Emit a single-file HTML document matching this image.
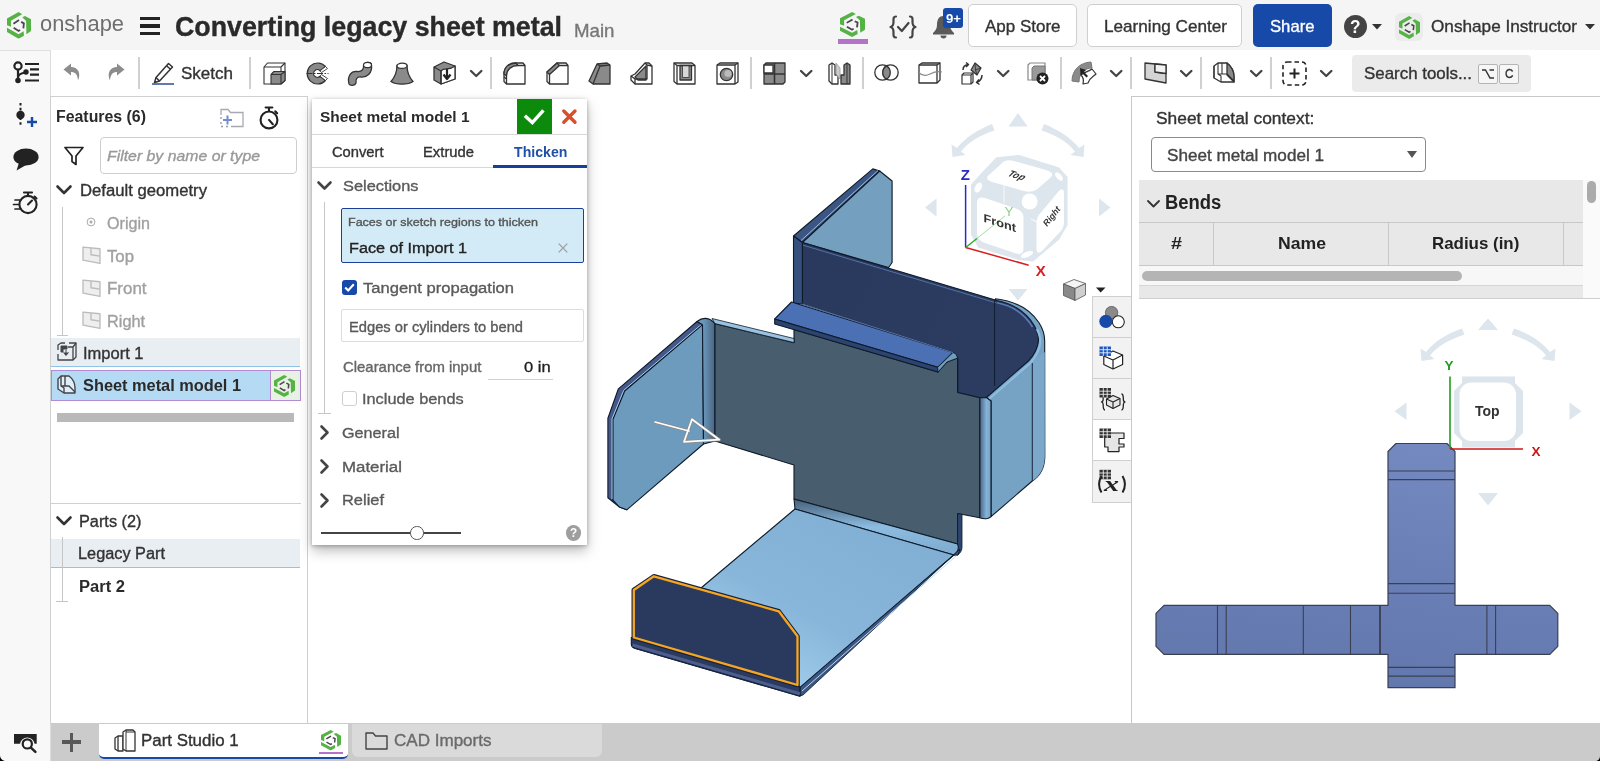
<!DOCTYPE html>
<html lang="en"><head><meta charset="utf-8"><title>Converting legacy sheet metal | Onshape</title>
<style>
*{box-sizing:border-box;margin:0;padding:0}
html,body{width:1600px;height:761px;overflow:hidden;background:#fff;font-family:"Liberation Sans",sans-serif}
#app{position:relative;width:1600px;height:761px;overflow:hidden;background:#fff;will-change:transform}
.a{position:absolute}
.t{position:absolute;white-space:nowrap;line-height:1;transform-origin:0 0;display:block}
svg{position:absolute;overflow:visible}
.btn{position:absolute;border:1px solid #cfcfcf;border-radius:5px;background:#fff}
.vd{position:absolute;width:2px;background:#d0d0d0;top:57px;height:32px}
</style></head><body><div id="app">
<!-- top bar -->
<div class="a" style="left:0;top:0;width:1600px;height:50px;background:#f5f5f5"></div>
<!-- toolbar -->
<div class="a" style="left:50px;top:50px;width:1550px;height:46px;background:#fff"></div>
<!-- left sidebar -->
<div class="a" style="left:0;top:50px;width:50.500px;height:711px;background:#f8f8f8;border-top:1px solid #e0e0e0;border-right:1px solid #dcdcdc"></div>

<!-- logo -->
<svg width="0" height="0" style="left:0;top:0"><defs>
 <symbol id="ons" viewBox="130 130 455 510" preserveAspectRatio="none">
  <polygon points="130,255 350,130 418,172 205,298 205,412 130,380" fill="#55b244"/>
  <polygon points="420,232 472,204 585,270 585,492 498,552 492,300" fill="#55b244"/>
  <polygon points="130,430 350,552 445,498 452,580 350,640 130,512" fill="#55b244"/>
  <path d="M252,352 L358,284 M398,318 L450,346 L440,442 M256,430 L350,490 L378,470" fill="none" stroke="#4a4650" stroke-width="34"/>
 </symbol></defs></svg>
<svg style="left:6.800px;top:11.800px" width="24" height="26.800"><use href="#ons" width="24" height="26.800"/></svg>
<span class="t" style="left:40.0px;top:12.7px;font-size:22.5px;font-weight:400;color:#6e6e6e;transform:scaleX(0.9730);-webkit-text-stroke:0">onshape</span>
<!-- hamburger -->
<div class="a" style="left:140px;top:17px;width:20px;height:3.4px;background:#222"></div>
<div class="a" style="left:140px;top:24.3px;width:20px;height:3.4px;background:#222"></div>
<div class="a" style="left:140px;top:31.6px;width:20px;height:3.4px;background:#222"></div>
<span class="t" style="left:175.0px;top:13.2px;font-size:28.0px;font-weight:700;color:#2a2a2a;transform:scaleX(0.9566);-webkit-text-stroke:0.4px">Converting legacy sheet metal</span>
<span class="t" style="left:574.0px;top:20.9px;font-size:19.0px;font-weight:400;color:#777;transform:scaleX(0.9832);-webkit-text-stroke:0.35px;">Main</span>

<!-- doc icon w/ purple underline -->
<svg style="left:840px;top:12px" width="25" height="25"><use href="#ons" width="25" height="25"/></svg>
<div class="a" style="left:838px;top:39px;width:30px;height:5px;background:#b273c9"></div>
<!-- {v} -->
<svg style="left:889px;top:15px" width="28" height="24" viewBox="0 0 28 24" fill="none" stroke="#444" stroke-width="2.2" stroke-linecap="round" stroke-linejoin="round">
 <path d="M7,1.5 C4,1.5 4.5,4 4.5,7 C4.5,10 3.5,11.5 1.5,12 C3.5,12.5 4.5,14 4.5,17 C4.5,20 4,22.5 7,22.5"/>
 <path d="M21,1.5 C24,1.5 23.5,4 23.5,7 C23.5,10 24.5,11.5 26.5,12 C24.5,12.5 23.5,14 23.5,17 C23.5,20 24,22.5 21,22.5"/>
 <path d="M9,12 L12.8,16 L19.5,8"/>
</svg>
<!-- bell -->
<svg style="left:932px;top:14px" width="23" height="25" viewBox="0 0 23 25">
 <path d="M11.5,2 C6,2 5,7 5,11 C5,15 3,17 1,19 L1,20.5 L22,20.5 L22,19 C20,17 18,15 18,11 C18,7 17,2 11.5,2 Z" fill="#5a5a5a"/>
 <path d="M8.5,21.5 a3,3 0 0 0 6,0 Z" fill="#5a5a5a"/>
</svg>
<div class="a" style="left:943px;top:8px;width:20px;height:20px;background:#1749a8;border-radius:3px"></div>
<span class="t" style="left:945.5px;top:12.0px;font-size:13.0px;font-weight:700;color:#fff;transform:scaleX(1.0121);">9+</span>
<!-- buttons -->
<div class="btn" style="left:968px;top:4px;width:109px;height:43px"></div>
<span class="t" style="left:985.0px;top:17.6px;font-size:17.0px;font-weight:400;color:#333;transform:scaleX(0.9987);-webkit-text-stroke:0.35px;">App Store</span>
<div class="btn" style="left:1087px;top:4px;width:155px;height:43px"></div>
<span class="t" style="left:1103.5px;top:17.6px;font-size:17.0px;font-weight:400;color:#333;transform:scaleX(1.0090);-webkit-text-stroke:0.35px;">Learning Center</span>
<div class="a" style="left:1253px;top:4px;width:79px;height:43px;background:#1749a8;border-radius:5px"></div>
<span class="t" style="left:1270.0px;top:17.6px;font-size:17.0px;font-weight:400;color:#fff;transform:scaleX(0.9811);-webkit-text-stroke:0.35px;">Share</span>
<!-- help -->
<div class="a" style="left:1344px;top:15px;width:23px;height:23px;border-radius:50%;background:#444"></div>
<span class="t" style="left:1350.3px;top:16.9px;font-size:19.0px;font-weight:700;color:#fff;transform:scaleX(0.9045);">?</span>
<svg style="left:1372px;top:23.5px" width="10" height="6"><polygon points="0,0 10,0 5,5.5" fill="#333"/></svg>
<!-- user -->
<div class="a" style="left:1395px;top:13px;width:28px;height:28px;border-radius:6px;background:#ececec"></div>
<svg style="left:1398.500px;top:15.500px" width="21" height="23"><use href="#ons" width="21" height="23"/></svg>
<span class="t" style="left:1431.0px;top:17.6px;font-size:17.0px;font-weight:400;color:#333;transform:scaleX(1.0099);-webkit-text-stroke:0.35px;">Onshape Instructor</span>
<svg style="left:1585px;top:23.5px" width="10" height="6"><polygon points="0,0 10,0 5,5.5" fill="#333"/></svg>
<!-- toolbar icons -->
<svg width="0" height="0" style="left:0;top:0"><defs>
 <g id="chev"><path d="M1,1 L6.2,6 L11.4,1" fill="none" stroke="#444" stroke-width="2.300" stroke-linecap="round" stroke-linejoin="round"/></g>
</defs></svg>
<!-- undo / redo -->
<svg style="left:63px;top:63px" width="18" height="19" viewBox="0 0 18 19"><path d="M8,0.5 L0.5,6.5 L8,12.5 L8,9 C12,9 14.5,11 15,17.5 C18.5,9.5 14.5,4.2 8,4 Z" fill="#8c8c8c"/></svg>
<svg style="left:107px;top:63px" width="18" height="19" viewBox="0 0 18 19"><path d="M10,0.5 L17.5,6.5 L10,12.5 L10,9 C6,9 3.5,11 3,17.5 C-0.5,9.5 3.5,4.2 10,4 Z" fill="#8c8c8c"/></svg>
<div class="vd" style="left:138px"></div>
<!-- pencil -->
<svg style="left:151px;top:62px" width="24" height="24" viewBox="0 0 24 24" fill="none" stroke="#333" stroke-width="1.5" stroke-linejoin="round">
 <path d="M17.5,1.5 L21.5,5 L8.5,19 L3.5,20.5 L5,15.5 Z"/><path d="M15.5,3.8 L19.5,7.3"/><path d="M5,15.5 L8.5,19"/>
 <path d="M1,22 L23,22" stroke="#1f3f88" stroke-width="1.400"/>
</svg>
<span class="t" style="left:181.0px;top:64.6px;font-size:17.0px;font-weight:400;color:#333;transform:scaleX(1.0006);-webkit-text-stroke:0.35px;">Sketch</span>
<div class="vd" style="left:249px"></div>
<!-- extrude -->
<svg style="left:263px;top:62px" width="23" height="23" viewBox="0 0 23 23" stroke="#333" stroke-width="1.100" stroke-linejoin="round">
 <path d="M1,5 L4.500,1 L22,1 L22,18.500 L18,22 L1,22 Z" fill="#fff"/><path d="M1,5 L18,5 L18,22 M18,5 L22,1" fill="none"/>
 <path d="M8,12.500 L11,9.500 L22,9.500 L22,18.500 L18,22 L8,22 Z" fill="#8a8a8a"/><path d="M8,12.500 L18,12.500 L18,22 M18,12.500 L22,9.500" fill="none"/>
</svg>
<!-- revolve -->
<svg style="left:306px;top:62px" width="23" height="23" viewBox="0 0 23 23">
 <path d="M19.500,4.500 A10.500,10.500 0 1 0 19.500,18.500 L14,14.200 A3.800,3.800 0 1 1 14,8.800 Z" fill="#8a8a8a" stroke="#333" stroke-width="1.200" stroke-linejoin="round"/>
 <path d="M19.500,4.500 L21.500,6.500 L15.500,10.500 L14,8.800 Z M19.500,18.500 L21.500,16.500 L15.500,12.500 L14,14.200 Z" fill="#fff" stroke="#333" stroke-width="0.900" stroke-linejoin="round"/>
 <path d="M0.500,11.500 L22.500,11.500" stroke="#333" stroke-width="1" stroke-dasharray="6,1.500,1.500,1.500"/>
</svg>
<!-- sweep -->
<svg style="left:347px;top:61px" width="26" height="25" viewBox="0 0 26 25">
 <path d="M2,23 C0,15 4,10 10,10.5 C15,11 17,8 16.5,4.5 C17,1 24,0 24.5,4 C25.5,12 20,16.5 14,16 C10,15.5 8.5,18 9,22 C8,25 3,25 2,23 Z" fill="#8a8a8a" stroke="#333" stroke-width="1.3"/>
 <ellipse cx="20.5" cy="4" rx="4" ry="2.6" fill="#fff" stroke="#333" stroke-width="1.2"/>
</svg>
<!-- loft -->
<svg style="left:390px;top:62px" width="24" height="23" viewBox="0 0 24 23">
 <path d="M7,3.5 C7,9 5,15 1,19.5 C6,23 18,23 23,19.5 C19,15 17,9 17,3.5 Z" fill="#8a8a8a" stroke="#333" stroke-width="1.3"/>
 <ellipse cx="12" cy="3.8" rx="5" ry="2.6" fill="#fff" stroke="#333" stroke-width="1.2"/>
</svg>
<!-- thicken -->
<svg style="left:433px;top:61px" width="23" height="24" viewBox="0 0 23 24" stroke="#333" stroke-width="1.3" stroke-linejoin="round">
 <path d="M1,6 L11,1 L22,5 L22,18 L8,23 L1,19 Z" fill="#8a8a8a"/>
 <path d="M8,10 C11,6 16,10 22,5 L22,18 L8,23 Z" fill="#fff"/><path d="M1,6 L8,10 L8,23" fill="none"/>
 <path d="M14,8 L14,17 M10.5,13.5 L14,18 L17.5,13.5" fill="none" stroke="#222" stroke-width="2.2"/>
</svg>
<svg style="left:469.5px;top:69.5px" width="13" height="8"><use href="#chev"/></svg>
<div class="vd" style="left:489.5px"></div>
<!-- fillet -->
<svg style="left:503px;top:62px" width="23" height="23" viewBox="0 0 23 23" stroke="#333" stroke-width="1.3" stroke-linejoin="round">
 <path d="M1,12 C1,5 6,1 13,1 L20,1 L22,3.5 L22,22 L3.5,22 L1,19.5 Z" fill="#fff"/>
 <path d="M1,12 C1,5 6,1 13,1 L15,3.5 C9,3.5 3.5,7 3.5,14 Z" fill="#8a8a8a"/>
 <path d="M3.5,14 L3.5,22 M15,3.5 L22,3.5 M1,15 L3.5,17" fill="none"/>
</svg>
<!-- chamfer -->
<svg style="left:545.5px;top:62px" width="23" height="23" viewBox="0 0 23 23" stroke="#333" stroke-width="1.3" stroke-linejoin="round">
 <path d="M1,10 L11,1 L20,1 L22,3.5 L22,22 L3.5,22 L1,19.5 Z" fill="#fff"/>
 <path d="M1,10 L11,1 L13.5,3.5 L3.5,12.5 Z" fill="#8a8a8a"/>
 <path d="M3.5,12.5 L3.5,22 M13.5,3.5 L22,3.5" fill="none"/>
</svg>
<!-- draft -->
<svg style="left:588px;top:62px" width="23" height="23" viewBox="0 0 23 23" stroke="#333" stroke-width="1.3" stroke-linejoin="round">
 <path d="M1,19 L9,2 L19,1 L22,3 L22,22 L5,22 Z" fill="#8a8a8a"/>
 <path d="M9,2 L12,4 L22,3 M12,4 L5,22" fill="none"/>
</svg>
<!-- rib -->
<svg style="left:630px;top:62px" width="23" height="23" viewBox="0 0 23 23" stroke="#333" stroke-width="1.3" stroke-linejoin="round">
 <path d="M1,14 L5,12 L15,1 L19,1 L22,4 L22,22 L5,22 L1,18 Z" fill="#fff"/>
 <path d="M5,15 L16,4 L16,18 L8,18 Z" fill="#8a8a8a"/>
 <path d="M1,14 L5,17 L5,22 M5,17 L17,17 L17,3 L15,1 M17,3 L22,4" fill="none"/>
</svg>
<!-- shell -->
<svg style="left:673px;top:62px" width="23" height="23" viewBox="0 0 23 23" stroke="#333" stroke-width="1.3" stroke-linejoin="round">
 <path d="M1,1 L19,1 L22,3.5 L22,22 L4,22 L1,19.5 Z" fill="#fff"/>
 <path d="M7,3.5 L18.5,3.5 L18.5,18 L7,18 Z" fill="#8a8a8a"/><path d="M9.5,3.5 L16,3.5 L16,15.5 L9.5,15.5 Z" fill="#d8d8d8" stroke-width="0.8"/>
 <path d="M1,1 L4,3.5 L22,3.5 M4,3.5 L4,22" fill="none"/>
</svg>
<!-- hole -->
<svg style="left:715.5px;top:62px" width="23" height="23" viewBox="0 0 23 23" stroke="#333" stroke-width="1.3" stroke-linejoin="round">
 <path d="M1,3 L4,1 L22,1 L22,20 L19,22 L1,22 Z" fill="#fff"/><path d="M1,3 L19,3 L19,22 M19,3 L22,1" fill="none"/>
 <circle cx="10.5" cy="12.5" r="6.2" fill="#8a8a8a"/><circle cx="12" cy="11.5" r="3.6" fill="#bbb" stroke="none"/>
</svg>
<div class="vd" style="left:749.5px"></div>
<!-- pattern -->
<svg style="left:763px;top:62px" width="23" height="23" viewBox="0 0 23 23" stroke="#333" stroke-width="1.3" stroke-linejoin="round">
 <path d="M1,3 L3,1 L22,1 L22,20 L20,22 L1,22 Z" fill="#8a8a8a"/>
 <path d="M1,3 L10,3 L10,11 L1,11 Z" fill="#fff"/>
 <path d="M11.5,1 L11.5,22 M1,12 L22,12" fill="none" stroke-width="1.6"/>
</svg>
<svg style="left:799.5px;top:69.5px" width="13" height="8"><use href="#chev"/></svg>
<!-- mirror -->
<svg style="left:828px;top:62px" width="23" height="23" viewBox="0 0 23 23" stroke="#333" stroke-width="1.3" stroke-linejoin="round">
 <path d="M1,3 L4,1 L7,3 L7,13 L10,13 L10,22 L4,22 L1,19 Z" fill="#fff"/><path d="M4,1 L4,22" fill="none" stroke-width="1"/>
 <path d="M8,1 L12,6 L12,17 L8,12 Z" fill="#ccc" stroke="#999" stroke-width="0.8"/>
 <path d="M13,22 L13,13 L16,13 L16,3 L19,1 L22,3 L22,22 Z" fill="#8a8a8a"/><path d="M19,1 L19,22" fill="none" stroke-width="1"/>
</svg>
<div class="vd" style="left:862px"></div>
<!-- boolean -->
<svg style="left:874px;top:63px" width="25" height="19" viewBox="0 0 25 19" stroke="#333" stroke-width="1.3">
 <circle cx="8.5" cy="9.5" r="7.7" fill="#fff"/><circle cx="16.5" cy="9.5" r="7.7" fill="#fff"/>
 <path d="M12.5,2.9 A7.7,7.7 0 0 1 12.5,16.1 A7.7,7.7 0 0 1 12.5,2.9 Z" fill="#8a8a8a"/>
</svg>
<!-- split -->
<svg style="left:917.5px;top:62px" width="24" height="22" viewBox="0 0 24 22" stroke="#333" stroke-width="1.3" stroke-linejoin="round" fill="none">
 <path d="M1,3 L4,1 L22,1 L22,18 L19,21 L1,21 Z" fill="#fff"/><path d="M1,3 L19,3 L19,21 M19,3 L22,1"/>
 <path d="M0,10 C4,14 8,14 12,12 C16,10 20,9 24,10" stroke="#888" stroke-width="1.2"/>
</svg>
<!-- transform -->
<svg style="left:960px;top:61px" width="24" height="24" viewBox="0 0 24 24" stroke="#333" stroke-width="1.2" stroke-linejoin="round">
 <path d="M2,14 L4,12 L13,12 L13,21 L11,23 L2,23 Z" fill="#fff"/><path d="M2,14 L11,14 L11,23 M11,14 L13,12" fill="none"/>
 <path d="M15,2 L21,7 L17,14 L11,9 Z" fill="#8a8a8a"/><path d="M15,2 L15.5,9 L17,14 M15.5,9 L21,7" fill="none" stroke-width="0.9"/>
 <path d="M3,9 C3,6 5,4 8,3.5 M6,1.5 L8.5,3.5 L6,6" fill="none" stroke-width="1.5"/>
 <path d="M22,14 C22,18 20,20 17,21.5 M19.5,23.5 L16.5,21.5 L19,18.5" fill="none" stroke-width="1.5"/>
</svg>
<svg style="left:997px;top:69.5px" width="13" height="8"><use href="#chev"/></svg>
<!-- delete -->
<svg style="left:1027px;top:62px" width="22" height="23" viewBox="0 0 22 23">
 <path d="M1,3 L3,1 L18,1 L18,16 L16,18 L1,18 Z" fill="#fff" stroke="#888" stroke-width="1.2"/>
 <path d="M5,6 L7,4 L18,4 L18,16 L16,18 L5,18 Z" fill="#9a9a9a" stroke="#777" stroke-width="1"/>
 <circle cx="15.5" cy="16.5" r="6" fill="#222"/><path d="M13,14 L18,19 M18,14 L13,19" stroke="#fff" stroke-width="1.8"/>
</svg>
<div class="vd" style="left:1059.5px"></div>
<!-- surface -->
<svg style="left:1071px;top:61px" width="26" height="25" viewBox="0 0 26 25">
 <path d="M1,20 C1,9 9,1.5 20,1 L21,7 C14,7 8,12 8,21 Z" fill="#8a8a8a" stroke="#777" stroke-width="1"/>
 <path d="M10,14 C13,11 17,11 21,8 L25,13 C22,16 19,16 17,22 L12,23 C13,19 12,16 10,14 Z" fill="#fff" stroke="#333" stroke-width="1.2" stroke-linejoin="round"/>
 <path d="M9,7 L15,9 L13,11 L17,15 L15.5,16.5 L11.5,12.5 L9.5,14.5 Z" fill="#222"/>
</svg>
<svg style="left:1109.5px;top:69.5px" width="13" height="8"><use href="#chev"/></svg>
<div class="vd" style="left:1130px"></div>
<!-- plane -->
<svg style="left:1143.5px;top:62px" width="23" height="22" viewBox="0 0 23 22" stroke="#333" stroke-width="1.3" stroke-linejoin="round">
 <path d="M1,1 L22,3 L22,21 L1,17 Z" fill="#d4d4d4"/><path d="M11,2 L11,10 L22,11.5" fill="none"/><path d="M11,2 L22,3 L22,11.5 L11,10 Z" fill="#f2f2f2"/>
</svg>
<svg style="left:1179.5px;top:69.5px" width="13" height="8"><use href="#chev"/></svg>
<div class="vd" style="left:1199.5px"></div>
<!-- sheet metal -->
<svg style="left:1213px;top:62px" width="22" height="21" viewBox="0 0 22 21" stroke="#333" stroke-width="1.3" stroke-linejoin="round">
 <path d="M1,4 L5,1 L14,1 C18,4 21,9 21,15 L21,20 L8,20 L1,16 Z" fill="#fff"/>
 <path d="M14,1 C18,4 21,9 21,15 L21,20 L14,13 Z" fill="#8a8a8a"/>
 <path d="M5,1 L5,12 L8,14 L8,20 M5,12 L14,12 L21,19 M9,1 L9,12 M1,4 L1,16" fill="none" stroke-width="1.1"/>
</svg>
<svg style="left:1249.5px;top:69.5px" width="13" height="8"><use href="#chev"/></svg>
<div class="vd" style="left:1269.5px"></div>
<!-- dashed box + -->
<svg style="left:1282px;top:61px" width="25" height="25" viewBox="0 0 25 25" fill="none" stroke="#222">
 <rect x="1" y="1" width="23" height="23" rx="4" stroke-width="1.6" stroke-dasharray="4.5,3"/>
 <path d="M12.5,7.5 L12.5,17.5 M7.5,12.5 L17.5,12.5" stroke-width="2"/>
</svg>
<svg style="left:1319.5px;top:69.5px" width="13" height="8"><use href="#chev"/></svg>
<!-- search -->
<div class="a" style="left:1352px;top:54.5px;width:179px;height:37px;background:#ebebeb;border-radius:4px"></div>
<span class="t" style="left:1364.0px;top:64.6px;font-size:17.0px;font-weight:400;color:#333;transform:scaleX(0.9939);-webkit-text-stroke:0.35px;">Search tools...</span>
<div class="a" style="left:1477.5px;top:63.5px;width:20px;height:20.5px;background:#f6f6f6;border:1px solid #b5b5b5;border-radius:2px"></div>
<div class="a" style="left:1498.5px;top:63.5px;width:20.5px;height:20.5px;background:#f6f6f6;border:1px solid #b5b5b5;border-radius:2px"></div>
<svg style="left:1481.5px;top:68.5px" width="12" height="10" fill="none" stroke="#333" stroke-width="1.4"><path d="M0,1 L3.5,1 L8,9 L12,9 M7.5,1 L12,1"/></svg>
<span class="t" style="left:1504.5px;top:67.9px;font-size:12.5px;font-weight:400;color:#333;transform:scaleX(0.9418);-webkit-text-stroke:0.35px;">C</span>
<!-- 3D viewport -->
<svg style="left:590px;top:97px" width="541" height="626" viewBox="590 97 541 626">
 <defs>
  <linearGradient id="gFloor" x1="0.9" y1="0" x2="0.1" y2="1"><stop offset="0" stop-color="#80aed2"/><stop offset="0.6" stop-color="#88b6da"/><stop offset="1" stop-color="#a9d5f2"/></linearGradient>
  <linearGradient id="gBendL" x1="0" y1="0" x2="1" y2="0"><stop offset="0" stop-color="#6d9bbe"/><stop offset="0.35" stop-color="#6a97ba"/><stop offset="1" stop-color="#486580"/></linearGradient>
  <linearGradient id="gBendR" x1="0" y1="0" x2="1" y2="0"><stop offset="0" stop-color="#4a6480"/><stop offset="0.6" stop-color="#84b4da"/><stop offset="1" stop-color="#76a2c4"/></linearGradient>
  <linearGradient id="gBendB" x1="0" y1="0" x2="0.12" y2="1"><stop offset="0" stop-color="#46607a"/><stop offset="0.55" stop-color="#8cbce0"/><stop offset="1" stop-color="#80aed2"/></linearGradient>
  <linearGradient id="gWall" x1="0" y1="0" x2="1" y2="0.3"><stop offset="0" stop-color="#2a3a5e"/><stop offset="1" stop-color="#2b3c60"/></linearGradient>
 </defs>
 <g stroke="#0e1a2a" stroke-width="1.1" stroke-linejoin="round">
  <!-- back tab edge strip -->
  <polygon points="793.5,236 872.8,168.9 879.7,171 802.4,242.5" fill="#3c5684"/>
  <path d="M800.500,241 L878,170.500" fill="none" stroke="#9fc6e6" stroke-width="0.900"/>
  <!-- back tab -->
  <polygon points="802.4,242.5 879.7,171 892.1,181 892.1,262.5 888.6,267.5" fill="#749fbe"/>
  <!-- outer light surfaces of curved wall + right side -->
  <path d="M995.500,298.800 C1014,301 1030,309 1039,322.800 C1043,329 1044.700,334 1044.700,341 L1044.800,457 C1044.500,468 1040,476 1032.300,481 L991,516.700 L991,401 L986.400,397.500 Z" fill="#76a2c4"/>
  <path d="M1032.300,362 L1044.800,352 L1044.800,457 C1044.500,468 1040,476 1032.300,481 Z" fill="#7aa7ca" stroke="none"/>
  <!-- back wall dark -->
  <path d="M802.400,242.500 L997,300.500 C1012,303.500 1026,311.500 1034.500,326 C1037.500,332 1038.500,336 1038.500,340 C1038.500,347 1034,355.500 1028.500,361 L986.400,397.500 L979.700,397.700 L957.600,392.500 L957.600,357.800 L953,352.500 L802,304 Z" fill="url(#gWall)"/>
  <path d="M802.400,245 L996.500,303" fill="none" stroke="#5878ae" stroke-width="0.900"/>
  <path d="M997,302.800 C1011,305.500 1024,313 1032.500,327" fill="none" stroke="#5a7cba" stroke-width="1.600"/>
  <path d="M1036.800,329 C1039.500,334 1040.500,338 1040.300,342 C1040,349 1035.500,357.500 1030.500,362.800 L989,399" fill="none" stroke="#8ebce0" stroke-width="2.200"/>
  <!-- bend strip left of wall -->
  <polygon points="793.500,236 802.400,242.500 802.400,304 793.500,303" fill="#36507e"/>
  <path d="M994.600,300 L994.600,386" fill="none" stroke-width="0.900"/>
  <path d="M1032.300,363 L1032.300,481" fill="none" stroke-width="0.900"/>
  <!-- bend strip right side -->
  <path d="M979.700,397.700 L986.400,397.500 L991,401 L991,516.700 C989,519 984,519.500 979.700,517.700 Z" fill="url(#gBendR)"/>
  <!-- left flange -->
  <polygon points="697,321.500 618.4,388.8 607.9,418.3 607.9,497.8 619.4,507 626.8,509.8 613,500 613,419.3 624.7,391 702.5,324.7" fill="#44598a"/>
  <polygon points="702.5,324.7 624.7,391 613,419.3 613,500 619.4,507 626.8,509.8 703.5,444" fill="#6d9bbe"/>
  <path d="M701.500,324.300 L623.700,390.300 L612,418.800 L612,499" fill="none" stroke="#a8cdea" stroke-width="1"/>
  <path d="M697,321.500 C702,317.500 709,316.500 715,323.600 L715,441 L703.5,444 L702.5,324.7 Z" fill="url(#gBendL)"/>
  <!-- front panel -->
  <path d="M715,323.600 L794,342.600 L794,329.500 L938,372 L947,362 L957.6,358 L957.6,392.500 L979.7,397.700 L979.7,517.700 L957.6,513.500 L957.6,544 L794,499 L794,465 L715,441 Z" fill="#485e6e"/>
  <path d="M712,318.500 L794,338.500 L794,342.600 L715,323.600 Z" fill="#9cc2e2" stroke-width="0.800"/>
  <!-- shelf -->
  <polygon points="791.500,302 774.700,319 937.700,367.300 953,352.500" fill="#4b70b4"/>
  <polygon points="774.700,319 937.700,367.300 938,372 774.700,324" fill="#2c4470"/>
  <polygon points="937.700,367.300 953,352.500 956,354 957.600,358 947,362 938,372" fill="#6f9dc0" stroke-width="0.8"/>
  <path d="M802,304 L953,352.500" fill="none" stroke="#6a8cc8" stroke-width="0.8"/>
  <!-- bend between front and floor -->
  <path d="M794,499 L957.600,544 C959.500,548 958,552 953.800,555 L795,509 Z" fill="url(#gBendB)"/>
  <path d="M957.600,513.500 L962,514.500 L962,547 C962,551 960,553 958,555 L953.800,555 C958,552 959.500,548 957.600,544 Z" fill="#2c4470" stroke-width="0.8"/>
  <!-- floor -->
  <polygon points="795,509 953.800,555 800,687.500 797.500,685 797.500,636.300 778.800,611.300 701,588" fill="url(#gFloor)"/>
  <polygon points="953.800,555 958,555 960,549 803,695 800,696 800,687.500" fill="#3c5684" stroke-width="0.8"/>
  <path d="M956,556 L802,691" fill="none" stroke="#b8dcf4" stroke-width="1"/>
  <!-- selected face lower strip -->
  <path d="M633.800,637.500 L797.500,685 L800,687.500 L800,696.300 L634.500,648.200 C632.500,647.500 631.300,646 631.300,644 L631.300,637.500 Z" fill="#2b3b60"/>
  <path d="M632.500,645 L800,693.800" fill="none" stroke="#4c5e8e" stroke-width="3"/>
  <path d="M634.500,648.200 L800,696.300" fill="none" stroke="#1a2540" stroke-width="0.900"/>
  <!-- selected face -->
  <polygon points="633.800,590 653.800,576.300 778.800,611.300 797.500,636.300 797.500,685 633.800,637.500" fill="#2a3a5e" stroke="#18233c" stroke-width="4.600"/>
  <polygon points="633.800,590 653.800,576.300 778.800,611.300 797.500,636.300 797.500,685 633.800,637.500" fill="#2a3a5e" stroke="#f6a623" stroke-width="2.300"/>
 </g>
 <!-- arrow manipulator -->
 <g fill="none" stroke-linejoin="round" stroke-linecap="round">
  <path d="M655,422 L689,431" stroke="#8a8a8a" stroke-width="3"/>
  <polygon points="692,419.300 684,441.800 719.300,439.700" stroke="#8a8a8a" stroke-width="3.2"/>
  <path d="M655,422 L689,431" stroke="#fff" stroke-width="1.6"/>
  <polygon points="692,419.300 684,441.800 719.300,439.700" stroke="#fff" stroke-width="1.8"/>
 </g>

 <!-- view cube -->
 <g fill="#dde5ed">
  <polygon points="1018,113 1027.500,126.500 1008.500,126.500"/>
  <polygon points="1018,300.500 1027.500,289 1008.500,289"/>
  <polygon points="925,207.500 936.500,198.500 936.500,216.500"/>
  <polygon points="1110.500,207.500 1099,198.500 1099,216.500"/>
  <path d="M992,124 C977,130 965,138 957,148 L951.500,144.500 L952.500,157 L965.500,155 L961,151.500 C968,142.500 980,135 994.500,130.500 Z"/>
  <path d="M1044,124 C1059,130 1071,138 1079,148 L1084.500,144.500 L1083.500,157 L1070.500,155 L1075,151.500 C1068,142.500 1056,135 1041.500,130.500 Z"/>
  <path d="M997,158.700 L1018.800,156.500 L1058,168.600 L1066,177.400 L1066,224.700 L1058,238.500 L1032.600,260 L1018.800,258.500 L979.400,246.400 L972.500,234.600 L972.500,185.300 L979.400,177.400 Z" stroke="#dde5ed" stroke-width="3" stroke-linejoin="round"/>
 </g>
 <g fill="#fff">
  <path d="M1000,165 C1004,160.500 1008,159.500 1014,161 L1046,170 C1053,172 1054,175 1049,179 L1038,188.500 C1033,192 1028,192.500 1022,190.500 L992,182 C986,180 985.500,177.500 990,174 Z"/>
  <path d="M977,203 C977,198 980,196.500 985,198 L1016,208.500 C1021,210.500 1023.500,213 1023.500,218 L1023.500,248 C1023.500,253 1021,255 1016,253.500 L985,243 C980,241 977,238 977,233 Z"/>
  <path d="M1036.500,224 C1036.500,219 1037.500,216 1041,212.500 L1058,192 C1061.500,188 1064,188.500 1064,193.500 L1064,221 C1064,226 1063,229 1059.500,232.500 L1043,250 C1039,254 1036.500,253.500 1036.500,248.500 Z"/>
  <ellipse cx="978.300" cy="187.500" rx="3.200" ry="5.500" transform="rotate(28 978.300 187.500)"/>
  <ellipse cx="1029.600" cy="201.500" rx="8" ry="8"/>
  <ellipse cx="1027" cy="254.500" rx="6.500" ry="2.800" transform="rotate(-22 1027 254.500)"/>
  <ellipse cx="1059" cy="176.500" rx="2.500" ry="5" transform="rotate(-42 1059 176.500)"/>
  <path d="M1003.600,185.500 L1004.400,185.500 L1004.400,203 L1003.600,203 Z M1031,218.500 L1037,221.500 L1037,222.500 L1031,219.500 Z"/>
 </g>
 <path d="M965.600,247.500 L965.600,185" stroke="#2a2ac8" stroke-width="1.500"/>
 <path d="M965.600,247.500 L1028.700,265.200" stroke="#d82020" stroke-width="1.500"/>
 <path d="M965.600,247.500 L977,238.400" stroke="#2aa82a" stroke-width="1.300"/><path d="M977,238.400 L1005,216" stroke="#a5dba5" stroke-width="1"/>
 <text x="960.800" y="179.500" font-family="Liberation Sans, sans-serif" font-size="15" font-weight="700" fill="#2a2ac8">Z</text>
 <text x="1035.800" y="276" font-family="Liberation Sans, sans-serif" font-size="15" font-weight="700" fill="#d82020">X</text>
 <text x="1004.500" y="216" font-family="Liberation Sans, sans-serif" font-size="13.500" fill="#8fd08f">Y</text>
 <text transform="translate(1006.500,175.500) rotate(17) skewX(-28)" font-family="Liberation Sans, sans-serif" font-size="9.500" font-weight="700" fill="#333">Top</text>
 <text transform="translate(983.500,221.800) skewY(17.400)" font-family="Liberation Sans, sans-serif" font-size="11.800" font-weight="700" fill="#333" textLength="32.500" lengthAdjust="spacingAndGlyphs">Front</text>
 <text transform="translate(1046.800,227.300) rotate(-52) skewX(-12)" font-family="Liberation Sans, sans-serif" font-size="8.800" font-weight="700" fill="#333">Right</text>
 <!-- small cube + caret -->
 <g stroke="#555" stroke-width="0.8" stroke-linejoin="round">
  <polygon points="1063.500,284 1074,279.500 1085.500,283.500 1075,288.500" fill="#f4f4f4"/>
  <polygon points="1063.500,284 1075,288.500 1075,300.500 1063.500,295.500" fill="#8a8a8a"/>
  <polygon points="1075,288.500 1085.500,283.500 1085.500,295 1075,300.500" fill="#cfcfcf"/>
 </g>
 <polygon points="1096,287.500 1105.500,287.500 1100.700,292.500" fill="#222"/>
</svg>
<!-- viewport side buttons -->
<div class="a" style="left:1092px;top:296px;width:40px;height:206.5px;background:#f2f2f2;border:1px solid #cfcfcf"></div>
<div class="a" style="left:1093px;top:419.500px;width:38px;height:40.500px;background:#fff"></div>
<div class="a" style="left:1093px;top:337px;width:38px;height:1px;background:#cfcfcf"></div>
<div class="a" style="left:1093px;top:378px;width:38px;height:1px;background:#cfcfcf"></div>
<div class="a" style="left:1093px;top:419px;width:38px;height:1px;background:#cfcfcf"></div>
<div class="a" style="left:1093px;top:460px;width:38px;height:1px;background:#cfcfcf"></div>
<svg style="left:1092px;top:296px" width="40" height="207" viewBox="1092 296 40 207">
 <defs><g id="grid"><rect x="0" y="0" width="11.500" height="9.500" fill="currentColor"/><path d="M0,3.200 L11.500,3.200 M0,6.300 L11.500,6.300 M3.800,0 L3.800,9.500 M7.700,0 L7.700,9.500" stroke="#fff" stroke-width="0.800"/></g></defs>
 <!-- appearance -->
 <circle cx="1111.600" cy="312.600" r="6.200" fill="#8a8a8a" stroke="#555" stroke-width="0.800"/>
 <circle cx="1118.300" cy="321.800" r="6" fill="#fff" stroke="#222" stroke-width="1.100"/>
 <circle cx="1105.900" cy="321.300" r="6.600" fill="#1749a8"/>
 <!-- configurations -->
 <g fill="#fff" stroke="#222" stroke-width="1.200" stroke-linejoin="round">
  <path d="M1103.800,356 L1113,351 L1122.600,355 L1122.600,364.500 L1113,369 L1103.800,364.500 Z"/><path d="M1103.800,356 L1113,360 L1122.600,355 M1113,360 L1113,369" fill="none"/>
 </g>
 <use href="#grid" x="1099.500" y="346.500" style="color:#1e56c0"/>
 <!-- config variables -->
 <g fill="#e6e6e6" stroke="#222" stroke-width="1.100" stroke-linejoin="round">
  <path d="M1106.500,399 L1113,395.500 L1120,398.500 L1120,405 L1113,408.500 L1106.500,405 Z"/><path d="M1106.500,399 L1113,402 L1120,398.500 M1113,402 L1113,408.500" fill="none"/>
  <path d="M1105,394 C1102.500,394 1103.500,399 1103,400.500 C1102.800,401.500 1102,401.800 1101.500,402 C1102,402.200 1102.800,402.500 1103,403.500 C1103.500,405 1102.500,410 1105,410" fill="none" stroke-width="1.300"/>
  <path d="M1121.500,394 C1124,394 1123,399 1123.500,400.500 C1123.700,401.500 1124.500,401.800 1125,402 C1124.500,402.200 1123.700,402.500 1123.500,403.500 C1123,405 1124,410 1121.500,410" fill="none" stroke-width="1.300"/>
 </g>
 <use href="#grid" x="1099.500" y="388" style="color:#333"/>
 <!-- flat pattern table (active) -->
 <path d="M1104.700,433 L1124,433 L1124,438.500 L1119,438.500 L1119,444 L1124,444 L1124,447 L1119,447 L1119,451.600 L1108,451.600 L1108,447 L1104.700,447 Z" fill="#e6e6e6" stroke="#222" stroke-width="1.200" stroke-linejoin="round"/>
 <use href="#grid" x="1099.500" y="428.500" style="color:#333"/>
 <!-- variable table -->
 <use href="#grid" x="1099.500" y="469.800" style="color:#333"/>
 <path d="M1101.500,476 C1098.500,481 1098.500,487.500 1101.500,492.500" fill="none" stroke="#222" stroke-width="2"/>
 <path d="M1122.500,476 C1125.500,481 1125.500,487.500 1122.500,492.500" fill="none" stroke="#222" stroke-width="2"/>
 <text x="1104" y="491" font-family="Liberation Serif, serif" font-size="20" font-style="italic" font-weight="700" fill="#222" textLength="15" lengthAdjust="spacingAndGlyphs">x</text>
</svg>
<!-- sidebar icons -->
<svg style="left:13px;top:61px" width="26" height="23" viewBox="0 0 26 23" fill="none" stroke="#222" stroke-width="2.2">
 <circle cx="5" cy="5" r="3.6"/><circle cx="5" cy="19.500" r="1.700" fill="#222"/><circle cx="13" cy="11" r="1.600" fill="#222"/>
 <path d="M5,8.5 L5,18 M5,17 C5,13 9,12 12,11.5"/>
 <path d="M12,3 L26,3 M17,8.3 L26,8.3 M17,13.6 L26,13.6 M12,19.5 L26,19.5"/>
</svg>
<svg style="left:15px;top:103px" width="24" height="25" viewBox="0 0 24 25">
 <path d="M5.5,0 L5.5,24" stroke="#222" stroke-width="2" stroke-dasharray="2.6,2.2"/>
 <circle cx="5.5" cy="12" r="4.2" fill="#222"/>
 <path d="M17,14 L17,24 M12,19 L22,19" stroke="#1749a8" stroke-width="2.4"/>
</svg>
<svg style="left:13px;top:148px" width="26" height="28" viewBox="0 0 26 28">
 <ellipse cx="13" cy="9" rx="12.600" ry="8.500" fill="#222"/><path d="M6,14.500 L3.500,22.500 L14,16.500 Z" fill="#222"/>
</svg>
<svg style="left:13px;top:191px" width="26" height="24" viewBox="0 0 26 24" fill="none" stroke="#222" stroke-width="2.1" stroke-linecap="round">
 <circle cx="15" cy="13.5" r="8.6"/><path d="M11,1.5 L19,1.5 M15,1.5 L15,4.5 M21.5,5.5 L23.5,7.5 M15,13.5 L19,9.5"/>
 <path d="M2,9 L7,9 M0.5,13.5 L5.5,13.5 M2,18 L7,18" stroke-width="1.7"/>
</svg>
<svg style="left:14px;top:734px" width="24" height="19" viewBox="0 0 24 19">
 <path d="M0,0 L22.700,0 L22.700,9.700 L20.600,9.700 A7.400,7.400 0 0 0 6,9.700 L0,9.700 Z" fill="#222"/>
 <circle cx="13.300" cy="9.900" r="4.600" fill="none" stroke="#222" stroke-width="2.200"/><path d="M16.900,13.600 L21.400,17.800" stroke="#222" stroke-width="2.500" stroke-linecap="round"/>
</svg>

<!-- features panel -->
<div class="a" style="left:50px;top:96px;width:258px;height:628px;background:#fff;border:1px solid #d0d0d0"></div>
<span class="t" style="left:55.7px;top:108.5px;font-size:16.0px;font-weight:700;color:#2a2a2a;transform:scaleX(0.9922);">Features (6)</span>
<!-- folder+ icon -->
<svg style="left:219px;top:107px" width="26" height="22" viewBox="0 0 26 22" fill="none">
 <path d="M2,8 L2,2.5 L9,2.5 L11.5,5.5 L24,5.5 L24,19.5 L12,19.5" stroke="#a9a9b2" stroke-width="1.300"/>
 <path d="M2,10 L2,12 M2,15 L2,17 M2,19.5 L4,19.5 M7,19.5 L9,19.5" stroke="#9999a8" stroke-width="1.300"/>
 <path d="M8.5,8.5 L8.5,17.5 M4,13 L13,13" stroke="#7090cc" stroke-width="2"/>
</svg>
<!-- stopwatch -->
<svg style="left:258px;top:106px" width="22" height="24" viewBox="0 0 22 25" fill="none" stroke="#222" stroke-width="2.2" stroke-linecap="round">
 <circle cx="11" cy="14.5" r="8.8"/><path d="M7.5,1.5 L14.5,1.5 M11,1.5 L11,5 M17.5,5.5 L19.5,7.5 M11,14.5 L15,19" />
</svg>
<!-- filter -->
<svg style="left:64px;top:146px" width="20" height="20" viewBox="0 0 20 20" fill="none" stroke="#222" stroke-width="1.7" stroke-linejoin="round"><path d="M1,1.5 L19,1.5 L12,10 L12,18.5 L8,15.5 L8,10 Z"/></svg>
<div class="a" style="left:99.5px;top:137px;width:197.5px;height:37px;border:1px solid #cfcfcf;border-radius:4px;background:#fff"></div>
<span class="t" style="left:106.5px;top:148.4px;font-size:15.5px;font-weight:400;color:#999;transform:scaleX(1.0208);font-style:italic;-webkit-text-stroke:0.35px;">Filter by name or type</span>
<!-- tree -->
<svg style="left:56px;top:185px" width="16" height="10" viewBox="0 0 16 10"><path d="M1.5,1.5 L8,8 L14.5,1.5" fill="none" stroke="#333" stroke-width="2.600" stroke-linecap="round" stroke-linejoin="round"/></svg>
<span class="t" style="left:80.0px;top:183.3px;font-size:16.0px;font-weight:400;color:#333;transform:scaleX(1.0424);-webkit-text-stroke:0.35px;">Default geometry</span>
<div class="a" style="left:62px;top:207px;width:1px;height:128px;background:#c6c6c6"></div>
<div class="a" style="left:57px;top:334.500px;width:11px;height:1px;background:#c6c6c6"></div>
<!-- origin -->
<svg style="left:86px;top:217px" width="10" height="10"><circle cx="5" cy="5" r="3.9" fill="none" stroke="#aaa" stroke-width="1"/><circle cx="5" cy="5" r="1.5" fill="#aaa"/></svg>
<span class="t" style="left:107.0px;top:215.5px;font-size:16.0px;font-weight:400;color:#a0a0a0;transform:scaleX(1.0073);-webkit-text-stroke:0.35px;">Origin</span>
<svg style="left:82px;top:246px" width="19" height="18.500" viewBox="0 0 19 17" preserveAspectRatio="none" fill="none" stroke="#bbb" stroke-width="1.3" stroke-linejoin="round"><path d="M1,1 L18,2.5 L18,16 L1,13 Z" fill="#eee"/><path d="M9,1.8 L9,8 L18,9.3"/></svg>
<span class="t" style="left:107.0px;top:248.8px;font-size:16.0px;font-weight:400;color:#a0a0a0;transform:scaleX(1.0468);-webkit-text-stroke:0.35px;">Top</span>
<svg style="left:82px;top:278.500px" width="19" height="18.500" viewBox="0 0 19 17" preserveAspectRatio="none" fill="none" stroke="#bbb" stroke-width="1.3" stroke-linejoin="round"><path d="M1,1 L18,2.5 L18,16 L1,13 Z" fill="#eee"/><path d="M9,1.8 L9,8 L18,9.3"/></svg>
<span class="t" style="left:107.0px;top:281.1px;font-size:16.0px;font-weight:400;color:#a0a0a0;transform:scaleX(1.0577);-webkit-text-stroke:0.35px;">Front</span>
<svg style="left:82px;top:311px" width="19" height="18.500" viewBox="0 0 19 17" preserveAspectRatio="none" fill="none" stroke="#bbb" stroke-width="1.3" stroke-linejoin="round"><path d="M1,1 L18,2.5 L18,16 L1,13 Z" fill="#eee"/><path d="M9,1.8 L9,8 L18,9.3"/></svg>
<span class="t" style="left:107.0px;top:313.5px;font-size:16.0px;font-weight:400;color:#a0a0a0;transform:scaleX(1.0176);-webkit-text-stroke:0.35px;">Right</span>
<!-- import row -->
<div class="a" style="left:51px;top:338px;width:249px;height:29px;background:#e9eef3;border-bottom:1.5px solid #8fc3e8"></div>
<svg style="left:57px;top:342px" width="20" height="20" viewBox="0 0 20 20" fill="none" stroke="#444" stroke-width="1.3" stroke-linejoin="round">
 <path d="M1,8 L1,3 L4,1 L8,1 M12,1 L19,1 L19,15 L16,18 L1,18 L1,12" /><path d="M16,18 L16,5 L19,1 M16,5 L11,5"/>
 <path d="M4,4 L10,4 L10,7 L6,7 L6,10 L4,10 Z M9,13 L9,8 M6.5,10.5 L9,13.5 L11.5,10.5" fill="#444" stroke-width="1"/>
</svg>
<span class="t" style="left:83.0px;top:346.1px;font-size:16.0px;font-weight:400;color:#333;transform:scaleX(1.0309);-webkit-text-stroke:0.35px;">Import 1</span>
<!-- sheet metal row -->
<div class="a" style="left:50.5px;top:370px;width:250px;height:31px;background:#b5daf3;border:1px solid #b48ad0"></div>
<div class="a" style="left:269.5px;top:371px;width:30px;height:29px;background:#e8f2e4;border-left:1px solid #b48ad0"></div>
<svg style="left:57px;top:375px" width="19" height="19" viewBox="0 0 19 19" fill="none" stroke="#444" stroke-width="1.4" stroke-linejoin="round">
 <path d="M1,4 L4,1 L12,1 C16,4 18,8 18,13 L18,18 L7,18 L1,14 Z" fill="#dfeefa"/><path d="M4,1 L4,11 L7,13 L7,18 M4,11 L12,11 L18,17 M8,1 L8,11"/>
</svg>
<span class="t" style="left:83.0px;top:378.3px;font-size:16.0px;font-weight:700;color:#2a2a2a;transform:scaleX(1.0212);">Sheet metal model 1</span>
<svg style="left:274px;top:374.500px" width="21" height="22"><use href="#ons" width="21" height="22"/></svg>
<!-- rollback bar -->
<div class="a" style="left:57px;top:412.5px;width:237px;height:9px;background:#b9b9b9"></div>
<!-- parts -->
<div class="a" style="left:51px;top:502.700px;width:250px;height:1px;background:#d0d0d0"></div>
<svg style="left:56px;top:515.5px" width="16" height="10" viewBox="0 0 16 10"><path d="M1.5,1.5 L8,8 L14.5,1.5" fill="none" stroke="#333" stroke-width="2.600" stroke-linecap="round" stroke-linejoin="round"/></svg>
<span class="t" style="left:79.4px;top:513.5px;font-size:16.0px;font-weight:400;color:#333;transform:scaleX(1.0188);-webkit-text-stroke:0.35px;">Parts (2)</span>
<div class="a" style="left:51px;top:538.5px;width:249px;height:29px;background:#e9eef3;border-bottom:1.5px solid #8fc3e8"></div>
<div class="a" style="left:62px;top:537px;width:1px;height:64px;background:#c6c6c6"></div>
<div class="a" style="left:56px;top:600.500px;width:12px;height:1px;background:#c6c6c6"></div>
<span class="t" style="left:78.2px;top:546.3px;font-size:16.0px;font-weight:400;color:#333;transform:scaleX(1.0190);-webkit-text-stroke:0.35px;">Legacy Part</span>
<span class="t" style="left:78.7px;top:578.5px;font-size:16.0px;font-weight:700;color:#2a2a2a;transform:scaleX(1.0345);">Part 2</span>
<!-- panel scrollbar strip -->

<!-- dialog -->
<div class="a" style="left:312px;top:99px;width:275px;height:446px;background:#fff;box-shadow:0 6px 12px rgba(0,0,0,0.26),0 1px 4px rgba(0,0,0,0.28)"></div>
<span class="t" style="left:319.5px;top:109.4px;font-size:15.5px;font-weight:700;color:#2a2a2a;transform:scaleX(0.9974);">Sheet metal model 1</span>
<div class="a" style="left:517px;top:99px;width:35px;height:35px;background:#0b8a0b"></div>
<svg style="left:520px;top:105px" width="28" height="22" viewBox="520 105 28 22"><path d="M524.900,115.800 L532.300,122.600 L543.400,110.300" fill="none" stroke="#fff" stroke-width="3.400"/></svg>
<svg style="left:560px;top:107px" width="20" height="20" viewBox="560 107 20 20"><path d="M563.800,111 L575,122.200 M575,111 L563.800,122.200" stroke="#d8502a" stroke-width="3.400" stroke-linecap="round"/></svg>
<div class="a" style="left:312px;top:134px;width:275px;height:1px;background:#d8d8d8"></div>
<span class="t" style="left:331.5px;top:145.0px;font-size:14.5px;font-weight:400;color:#333;transform:scaleX(1.0145);-webkit-text-stroke:0.35px;">Convert</span>
<span class="t" style="left:422.5px;top:145.0px;font-size:14.5px;font-weight:400;color:#333;transform:scaleX(1.0207);-webkit-text-stroke:0.35px;">Extrude</span>
<span class="t" style="left:513.6px;top:145.0px;font-size:14.5px;font-weight:700;color:#2050a8;transform:scaleX(0.9745);">Thicken</span>
<div class="a" style="left:312px;top:167px;width:275px;height:1px;background:#d8d8d8"></div>
<div class="a" style="left:493px;top:165.200px;width:94px;height:2.600px;background:#14409a"></div>
<svg style="left:317px;top:181px" width="15" height="10" viewBox="0 0 15 10"><path d="M1.5,1.5 L7.5,7.5 L13.5,1.5" fill="none" stroke="#444" stroke-width="2.600" stroke-linecap="round" stroke-linejoin="round"/></svg>
<span class="t" style="left:342.5px;top:178.4px;font-size:15.5px;font-weight:400;color:#5a5a5a;transform:scaleX(1.0557);-webkit-text-stroke:0.35px;">Selections</span>
<div class="a" style="left:324.300px;top:202px;width:1px;height:211px;background:#c6c6c6"></div>
<div class="a" style="left:318px;top:412.500px;width:13px;height:1px;background:#c6c6c6"></div>
<!-- selection box -->
<div class="a" style="left:340.5px;top:208px;width:243px;height:55px;background:#d3ebf7;border:1.300px solid #1a409a;border-radius:2px"></div>
<span class="t" style="left:348.3px;top:216.7px;font-size:11.5px;font-weight:400;color:#555;transform:scaleX(1.0888);-webkit-text-stroke:0.35px;">Faces or sketch regions to thicken</span>
<span class="t" style="left:349.3px;top:239.6px;font-size:15.5px;font-weight:400;color:#222;transform:scaleX(1.0456);-webkit-text-stroke:0.35px;">Face of Import 1</span>
<svg style="left:558px;top:243px" width="10" height="10"><path d="M0.7,0.7 L9.3,9.3 M9.3,0.7 L0.7,9.3" stroke="#9a9a9a" stroke-width="1.2"/></svg>
<!-- checkbox -->
<div class="a" style="left:341.7px;top:279.5px;width:15px;height:15px;background:#1749a8;border-radius:3px"></div>
<svg style="left:344px;top:282.5px" width="11" height="9" viewBox="0 0 11 9"><path d="M1.2,4.5 L4.2,7.5 L9.8,1.3" fill="none" stroke="#fff" stroke-width="2.1"/></svg>
<span class="t" style="left:362.7px;top:279.6px;font-size:15.5px;font-weight:400;color:#5a5a5a;transform:scaleX(1.0683);-webkit-text-stroke:0.35px;">Tangent propagation</span>
<div class="a" style="left:340.5px;top:309px;width:243px;height:33px;background:#fff;border:1px solid #dcdcdc;border-radius:2px"></div>
<span class="t" style="left:349.3px;top:320.0px;font-size:14.5px;font-weight:400;color:#5a5a5a;transform:scaleX(1.0135);-webkit-text-stroke:0.35px;">Edges or cylinders to bend</span>
<span class="t" style="left:343.4px;top:360.0px;font-size:14.5px;font-weight:400;color:#666;transform:scaleX(1.0276);-webkit-text-stroke:0.35px;">Clearance from input</span>
<span class="t" style="left:523.7px;top:359.2px;font-size:15.5px;font-weight:400;color:#222;transform:scaleX(1.0646);-webkit-text-stroke:0.35px;">0 in</span>
<div class="a" style="left:488px;top:379px;width:65px;height:1px;background:#d0d0d0"></div>
<div class="a" style="left:342px;top:391px;width:14.5px;height:14.5px;background:#fff;border:1px solid #cfcfcf;border-radius:3px"></div>
<span class="t" style="left:362.0px;top:390.6px;font-size:15.5px;font-weight:400;color:#5a5a5a;transform:scaleX(1.0537);-webkit-text-stroke:0.35px;">Include bends</span>
<!-- collapsed groups -->
<svg style="left:319.5px;top:425px" width="10" height="15" viewBox="0 0 10 15"><path d="M1.5,1.5 L7.5,7.5 L1.5,13.5" fill="none" stroke="#444" stroke-width="2.600" stroke-linecap="round" stroke-linejoin="round"/></svg>
<span class="t" style="left:342.0px;top:424.9px;font-size:15.5px;font-weight:400;color:#5a5a5a;transform:scaleX(1.0426);-webkit-text-stroke:0.35px;">General</span>
<svg style="left:319.5px;top:458.7px" width="10" height="15" viewBox="0 0 10 15"><path d="M1.5,1.5 L7.5,7.5 L1.5,13.5" fill="none" stroke="#444" stroke-width="2.600" stroke-linecap="round" stroke-linejoin="round"/></svg>
<span class="t" style="left:342.0px;top:458.6px;font-size:15.5px;font-weight:400;color:#5a5a5a;transform:scaleX(1.0883);-webkit-text-stroke:0.35px;">Material</span>
<svg style="left:319.5px;top:492.5px" width="10" height="15" viewBox="0 0 10 15"><path d="M1.5,1.5 L7.5,7.5 L1.5,13.5" fill="none" stroke="#444" stroke-width="2.600" stroke-linecap="round" stroke-linejoin="round"/></svg>
<span class="t" style="left:342.0px;top:492.4px;font-size:15.5px;font-weight:400;color:#5a5a5a;transform:scaleX(1.0589);-webkit-text-stroke:0.35px;">Relief</span>
<!-- slider -->
<div class="a" style="left:320.5px;top:532.2px;width:140px;height:1.6px;background:#444"></div>
<div class="a" style="left:410.3px;top:526.3px;width:13.4px;height:13.4px;border-radius:50%;background:#fff;border:1.5px solid #555"></div>
<div class="a" style="left:565.5px;top:525px;width:15.5px;height:15.5px;border-radius:50%;background:#9e9e9e"></div>
<span class="t" style="left:569.6px;top:526.3px;font-size:13.0px;font-weight:700;color:#fff;transform:scaleX(0.9065);">?</span>
<!-- right panel -->
<div class="a" style="left:1130.500px;top:95.500px;width:470px;height:628px;background:#fff;border-left:1px solid #c8c8c8;border-top:1px solid #c8c8c8"></div>
<span class="t" style="left:1155.7px;top:110.8px;font-size:16.0px;font-weight:400;color:#333;transform:scaleX(1.0853);-webkit-text-stroke:0.35px;">Sheet metal context:</span>
<div class="a" style="left:1150.5px;top:137px;width:275px;height:35px;background:#fff;border:1px solid #8a8a8a;border-radius:4px"></div>
<span class="t" style="left:1167.3px;top:147.5px;font-size:16.0px;font-weight:400;color:#444;transform:scaleX(1.0698);-webkit-text-stroke:0.35px;">Sheet metal model 1</span>
<svg style="left:1407px;top:151px" width="10" height="7"><polygon points="0,0 10,0 5,7" fill="#555"/></svg>
<!-- table -->
<div class="a" style="left:1138.5px;top:179.5px;width:444.5px;height:85.5px;background:#e8e8e8"></div>
<div class="a" style="left:1138.5px;top:222px;width:444.5px;height:1px;background:#c8c8c8"></div>
<div class="a" style="left:1138.5px;top:264.5px;width:444.5px;height:1px;background:#c8c8c8"></div>
<div class="a" style="left:1213px;top:223px;width:1px;height:42px;background:#c8c8c8"></div>
<div class="a" style="left:1388px;top:223px;width:1px;height:42px;background:#c8c8c8"></div>
<div class="a" style="left:1563.3px;top:223px;width:1px;height:42px;background:#c8c8c8"></div>
<svg style="left:1147px;top:199.5px" width="13" height="8" viewBox="0 0 13 8"><path d="M1,1 L6.5,6.5 L12,1" fill="none" stroke="#333" stroke-width="1.8" stroke-linecap="round" stroke-linejoin="round"/></svg>
<span class="t" style="left:1164.7px;top:192.0px;font-size:20.0px;font-weight:700;color:#222;transform:scaleX(0.9211);">Bends</span>
<span class="t" style="left:1171.0px;top:234.9px;font-size:17.0px;font-weight:700;color:#222;transform:scaleX(1.1638);">#</span>
<span class="t" style="left:1277.5px;top:234.9px;font-size:17.0px;font-weight:700;color:#222;transform:scaleX(1.0365);">Name</span>
<span class="t" style="left:1432.3px;top:234.9px;font-size:17.0px;font-weight:700;color:#222;transform:scaleX(0.9939);">Radius (in)</span>
<!-- h scroll -->
<div class="a" style="left:1138.5px;top:265.5px;width:444.5px;height:19px;background:#f7f7f7"></div>
<div class="a" style="left:1142px;top:271px;width:320px;height:9.5px;border-radius:5px;background:#b4b4b4"></div>
<div class="a" style="left:1138.5px;top:284.5px;width:444.5px;height:1px;background:#d6d6d6"></div>
<div class="a" style="left:1138.5px;top:285.5px;width:444.5px;height:12.5px;background:#e8e8e8"></div>
<div class="a" style="left:1138.5px;top:298px;width:461.5px;height:1px;background:#cfcfcf"></div>
<!-- v scroll -->
<div class="a" style="left:1583px;top:179.5px;width:17px;height:118.5px;background:#fafafa"></div>
<div class="a" style="left:1587px;top:180.5px;width:9px;height:22px;border-radius:4.5px;background:#ababab"></div>

<!-- flat pattern -->
<svg style="left:1131px;top:300px" width="469" height="423" viewBox="1131 300 469 423">
 <defs><linearGradient id="fg" x1="0.6" y1="0" x2="0.4" y2="1"><stop offset="0" stop-color="#7489c0"/><stop offset="0.5" stop-color="#6a7fb6"/><stop offset="1" stop-color="#6277ac"/></linearGradient></defs>
 <!-- nav arrows -->
 <g fill="#dde5ed">
  <polygon points="1488,318.5 1498,330 1478,330"/>
  <polygon points="1488,505.5 1498,493 1478,493"/>
  <polygon points="1394.5,411.3 1406.5,402.5 1406.5,420"/>
  <polygon points="1581.5,411.3 1569.5,402.5 1569.5,420"/>
  <path d="M1462,328.5 C1446,334 1434,342 1426,352 L1420.5,348.5 L1421.5,361 L1434.5,359 L1430,355.5 C1437,346.5 1449,339.5 1464.5,334.5 Z"/>
  <path d="M1514,328.5 C1530,334 1542,342 1550,352 L1555.500,348.5 L1554.5,361 L1541.500,359 L1546,355.500 C1539,346.500 1527,339.500 1511.500,334.500 Z"/>
 </g>
 <!-- cube top -->
 <path d="M1462,376.500 L1515,376.500 L1515,383 L1523,391 L1523,433 L1515,441 L1515,447.5 L1462,447.5 L1462,441 L1454,433 L1454,391 L1462,383 Z" fill="#dce4ec"/>
 <rect x="1459.500" y="382.500" width="56.500" height="58.500" rx="12" fill="#fff"/>
 <!-- shape -->
 <path d="M1396,443.500 L1447,443.500 L1455,451.500 L1455,605.300 L1549.800,605.300 L1557.800,613.300 L1557.800,646.400 L1549.800,654.400 L1455,654.400 L1455,687.700 L1388,687.700 L1388,654.400 L1164,654.400 L1156,646.400 L1156,613.300 L1164,605.300 L1388,605.300 L1388,451.500 Z" fill="url(#fg)" stroke="#3a4052" stroke-width="1.2" stroke-linejoin="round"/>
 <g stroke="#3a4052" stroke-width="1.1" fill="none">
  <path d="M1388,471 L1455,471 M1388,479.600 L1455,479.600 M1388,583.600 L1455,583.600 M1388,593.200 L1455,593.200 M1388,667.400 L1455,667.400 M1388,676.100 L1455,676.100"/>
  <path d="M1217.500,605.300 L1217.500,654.400 M1226.200,605.300 L1226.200,654.400 M1303.300,605.300 L1303.300,654.400 M1350.500,605.300 L1350.500,654.400 M1486.900,605.300 L1486.900,654.400 M1495.600,605.300 L1495.600,654.400"/>
  <path d="M1380,605.300 L1380,654.400" stroke-width="1.8"/>
 </g>
 <!-- axes -->
 <path d="M1450,376.500 L1450,449" stroke="#1e9e1e" stroke-width="1.6"/>
 <path d="M1450,449 L1523,449" stroke="#cc1616" stroke-width="1.6"/>
 <text x="1444.600" y="369.500" font-family="Liberation Sans, sans-serif" font-size="13.500" font-weight="700" fill="#1e9e1e">Y</text>
 <text x="1531.500" y="456" font-family="Liberation Sans, sans-serif" font-size="13.500" font-weight="700" fill="#cc1616">X</text>
</svg>
<span class="t" style="left:1475.4px;top:403.7px;font-size:14.0px;font-weight:700;color:#333;transform:scaleX(0.9995);">Top</span>
<!-- bottom tab bar -->
<div class="a" style="left:50.500px;top:723px;width:1550px;height:38px;background:#cbcbcb"></div>
<div class="a" style="left:69.500px;top:733px;width:3.600px;height:18.500px;background:#585858"></div>
<div class="a" style="left:62px;top:740.200px;width:18.500px;height:3.600px;background:#585858"></div>
<div class="a" style="left:99px;top:723.5px;width:248.500px;height:35.5px;background:#fff;border-bottom:2.500px solid #1749a8;border-radius:0 0 5px 5px"></div>
<svg style="left:114px;top:729px" width="22" height="23" viewBox="0 0 22 23" fill="#fff" stroke="#333" stroke-width="1.300" stroke-linejoin="round">
 <path d="M1,9 L4,7 L9,7 L9,22 L4,22 L1,20 Z"/><path d="M4,7 L4,22" fill="none"/>
 <path d="M9,3 L12,1 L19,1 L21,3 L21,22 L12,22 L9,20 Z"/><path d="M12,1 L12,22 M12,3 L21,3" fill="none" stroke-width="1"/>
</svg>
<span class="t" style="left:141.0px;top:733.1px;font-size:16.0px;font-weight:400;color:#333;transform:scaleX(1.0552);-webkit-text-stroke:0.35px;">Part Studio 1</span>
<svg style="left:320.500px;top:730px" width="20" height="20.500"><use href="#ons" width="20" height="20.500"/></svg>
<div class="a" style="left:318.500px;top:752px;width:24px;height:1.500px;background:#b273c9"></div>
<div class="a" style="left:351.500px;top:723.5px;width:250px;height:33.500px;background:#dadada;border-radius:0 0 6px 6px"></div>
<svg style="left:365px;top:732px" width="23" height="18" viewBox="0 0 23 18" fill="none" stroke="#444" stroke-width="1.400" stroke-linejoin="round"><path d="M1,1 L8,1 L10.500,4 L22,4 L22,17 L1,17 Z"/></svg>
<span class="t" style="left:393.5px;top:733.1px;font-size:16.0px;font-weight:400;color:#6a6a6a;transform:scaleX(1.0648);-webkit-text-stroke:0.35px;">CAD Imports</span>
<!-- screenshot rounded corners -->
<svg style="left:0;top:755px" width="6" height="6"><path d="M0,0 C0,3.500 2.500,6 6,6 L0,6 Z" fill="#000"/></svg>
<svg style="left:1595px;top:756px" width="5" height="5"><path d="M5,0 C5,3 3,5 0,5 L5,5 Z" fill="#000"/></svg>
</div></body></html>
